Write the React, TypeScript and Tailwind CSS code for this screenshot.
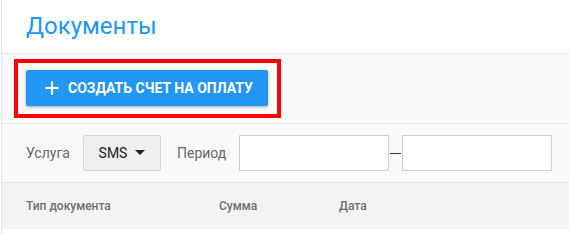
import { Plus } from "lucide-react";

export default function App() {
  return (
    <div className="w-[569px] h-[234px] overflow-hidden bg-white font-['Roboto',sans-serif]">
      <div className="ml-px h-full border-l border-[#e5e5e5]">
        <div className="h-[54px] flex items-center pl-[24px] border-b border-[#e5e5e5]">
          <h1 className="text-[24px] leading-none text-[#2196f3] pb-[2px]">Документы</h1>
        </div>
        <div className="h-[70px] flex items-center pl-[12px] bg-[#fafafa] border-b border-[#e5e5e5]">
          <div className="border-4 border-[#ff0000] pt-[7px] pb-[8px] pl-[8px] pr-[9px]">
            <button className="h-[36px] w-[242px] flex items-center gap-[6px] pl-[16px] rounded-[2px] bg-[#2196f3] text-white text-[14px] font-bold shadow-[0_1px_3px_rgba(0,0,0,0.35)]">
              <Plus className="w-[20px] h-[20px]" strokeWidth={2.5} />
              <span>СОЗДАТЬ СЧЕТ НА ОПЛАТУ</span>
            </button>
          </div>
        </div>
        <div className="h-[59px] flex items-center pl-[24px] bg-[#f9f9f9] border-b border-[#e5e5e5] text-[14px]">
          <span className="text-[#666666] w-[57px]">Услуга</span>
          <div className="h-[36px] w-[78px] flex items-center justify-center gap-[8px] bg-[#efefef] border border-[#d6d6d6] rounded-[2px] text-[#222222]">
            <span>SMS</span>
            <svg width="10" height="6" viewBox="0 0 10 6">
              <path d="M0 0 L10 0 L5 5 Z" fill="#222" />
            </svg>
          </div>
          <span className="text-[#666666] ml-[16px] w-[62px]">Период</span>
          <div className="h-[36px] w-[150px] bg-white border border-[#cfcfcf]" />
          <div className="w-[13px] flex justify-center">
            <div className="w-[11px] h-px bg-[#333333]" />
          </div>
          <div className="h-[36px] w-[150px] bg-white border border-[#cfcfcf]" />
        </div>
        <div className="h-[46px] flex items-center pl-[24px] bg-[#f3f3f3] text-[12px] font-medium text-[#6f6f6f]">
          <span className="w-[193px]">Тип документа</span>
          <span className="w-[120px]">Сумма</span>
          <span>Дата</span>
        </div>
      </div>
    </div>
  );
}
